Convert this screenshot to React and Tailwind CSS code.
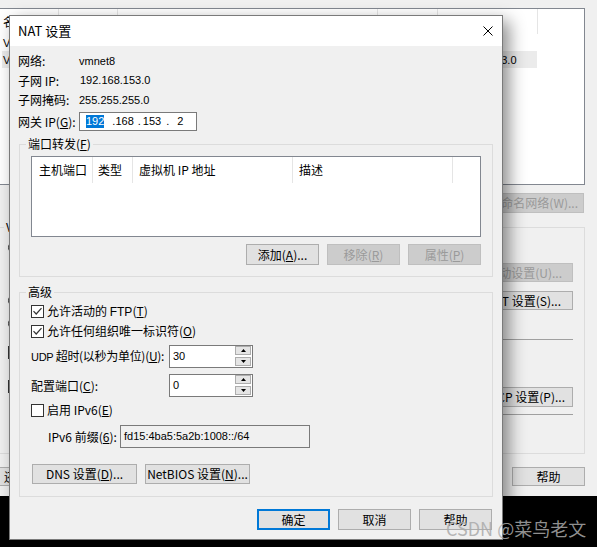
import clsx from "clsx"

function Acc({ k }){
 return(
  <>
   (<span className="underline decoration-1 underline-offset-[1px]">{k}</span>)
  </>
 )
}

// latin values are drawn smaller, like the dialog's Tahoma text
function L({ children, className }){
 return <span className={clsx("font-['Liberation_Sans',sans-serif] text-[11px]", className)}>{children}</span>
}

function Btn({ children, className, disabled, primary, justify }){
 return(
  <div
   className={clsx(
    "flex items-center shrink-0 text-[12px] leading-none",
    justify || "justify-center",
    disabled
     ? "bg-[#cccccc] border border-[#bfbfbf] text-[#9a9a9a]"
     : primary
     ? "bg-[#e1e1e1] border-2 border-[#0078d7]"
     : "bg-[#e1e1e1] border border-[#adadad]",
    className
   )}
  >
   {children}
  </div>
 )
}

function Check({ on }){
 return(
  <div className="w-[13px] h-[13px] shrink-0 border border-[#333333] bg-white flex items-center justify-center">
   {on && (
    <svg width="11" height="11" viewBox="0 0 11 11">
     <path d="M1.5 5.2 L4.2 8 L9.5 2.2" fill="none" stroke="#333333" strokeWidth="1.2" />
    </svg>
   )}
  </div>
 )
}

function Radio(){
 return <div className="w-[13px] h-[13px] shrink-0 rounded-full border border-[#333333] bg-white" />
}

function Group({ title, className, children }){
 return(
  <fieldset className={clsx("border border-[#dcdcdc] min-w-0", className)}>
   <legend className="ml-[6px] px-[2px] h-[14px] leading-[14px] text-[12px]">{title}</legend>
   {children}
  </fieldset>
 )
}

function Spin({ value }){
 return(
  <div className="flex w-[84px] h-[23px] border border-[#7a7a7a] bg-white">
   <div className="flex-1 flex items-center pl-[3px]"><L>{value}</L></div>
   <div className="w-[17px] flex flex-col gap-[2px] pb-[1px] pr-[1px]">
    <div className="flex-1 border border-[#adadad] bg-[#e5e5e5] flex items-center justify-center">
     <svg width="5" height="3" viewBox="0 0 5 3"><path d="M0 3 L2.5 0 L5 3Z" fill="#000" /></svg>
    </div>
    <div className="flex-1 border border-[#adadad] bg-[#e5e5e5] flex items-center justify-center">
     <svg width="5" height="3" viewBox="0 0 5 3"><path d="M0 0 L2.5 3 L5 0Z" fill="#000" /></svg>
    </div>
   </div>
  </div>
 )
}

function BackWindow(){
 return(
  <div className="h-[496px] bg-[#f0f0f0] pt-[8px] flex flex-col overflow-hidden text-[12px] text-black">

   {/* network list */}
   <div className="w-[585px] h-[177px] shrink-0 bg-white border-t border-r border-b border-[#828790] flex flex-col">
    <div className="flex h-[25px] shrink-0">
     <div className="w-[59px] border-r border-[#e5e5e5] pl-[3px] flex items-center">名称</div>
     <div className="w-[59px] border-r border-[#e5e5e5]" />
     <div className="w-[260px] border-r border-[#e5e5e5]" />
     <div className="w-[60px] border-r border-[#e5e5e5]" />
     <div className="w-[100px] border-r border-[#e5e5e5]" />
    </div>
    <div className="flex h-[17px] items-center">
     <div className="w-[59px] pl-[3px]"><L>VMnet1</L></div>
    </div>
    <div className="flex h-[17px] items-center ml-[2px] w-[535px] bg-[#ebebeb]">
     <div className="w-[57px] pl-[1px]"><L>VMnet8</L></div>
     <div className="w-[59px]" />
     <div className="w-[260px]" />
     <div className="w-[60px]" />
     <div className="w-[100px] pl-[9px]"><L>192.168.153.0</L></div>
    </div>
   </div>

   <div className="flex justify-end mt-[8px] mr-[13px] h-[20px]">
    <Btn disabled justify="justify-end" className="w-[105px] h-[20px] pr-[5px]">重命名网络(W)...</Btn>
   </div>

   {/* VMnet info */}
   <Group title="VMnet 信息" className="mt-[7px] -ml-[3px] mr-[12px] pb-[7px]">
    <div className="flex flex-col pl-[10px] pr-[11px]">
     <div className="flex items-center h-[20px] mt-[3px]">
      <Radio />
     </div>
     <div className="flex items-center justify-end h-[19px] mt-[6px]">
      <Btn disabled justify="justify-end" className="w-[100px] h-[19px] pr-[10px]">自动设置(U)...</Btn>
     </div>
     <div className="flex items-center justify-between h-[19px] mt-[9px]">
      <Radio />
      <Btn justify="justify-end" className="w-[100px] h-[19px] pr-[11px]">NAT 设置(S)...</Btn>
     </div>
     <div className="flex items-center h-[20px] mt-[3px]">
      <Radio />
     </div>
     <div className="h-[1px] mt-[6px] ml-[20px] bg-[#a0a0a0]" />
     <div className="flex items-center h-[20px] mt-[2px]">
      <Check on />
     </div>
     <div className="h-[14px]" />
     <div className="flex justify-between h-[31px]">
      <div className="flex items-center h-[20px]">
       <Check on />
      </div>
      <Btn justify="justify-end" className="w-[100px] h-[20px] self-end pr-[7px]">DHCP 设置(P)...</Btn>
     </div>
     <div className="h-[1px] mt-[7px] ml-[20px] bg-[#a0a0a0]" />
     <div className="h-[21px] mt-[10px]" />
    </div>
   </Group>

   <div className="flex justify-between items-center h-[19px] mt-[13px] mr-[12px] -ml-[5px]">
    <Btn justify="justify-start" className="w-[110px] h-[19px] pl-[8px]">还原默认设置(R)</Btn>
    <Btn className="w-[73px] h-[19px]">帮助</Btn>
   </div>

  </div>
 )
}

export default function App(){

 return(

  <div className="relative w-[597px] h-[547px] bg-black overflow-hidden whitespace-nowrap font-['Noto_Sans_CJK_SC',sans-serif] text-black">

   <BackWindow />

   {/* NAT DIALOG */}

   <div className="absolute left-[9px] top-[15px] w-[494px] h-[525px] border border-[#7a7a7a] bg-[#f0f0f0] shadow-[6px_6px_16px_rgba(0,0,0,0.45)] flex flex-col text-[12px]">

    <div className="h-[30px] shrink-0 bg-white flex items-center justify-between pl-[8px]">
     <span className="text-[13px]">NAT 设置</span>
     <svg className="mr-[9px]" width="10" height="10" viewBox="0 0 10 10">
      <path d="M0.5 0.5 L9.5 9.5 M9.5 0.5 L0.5 9.5" stroke="#000" strokeWidth="1" />
     </svg>
    </div>

    <div className="flex flex-col pt-[5px]">

     <div className="flex h-[20px] items-center pl-[8px]">
      <span className="w-[61px]">网络:</span>
      <L>vmnet8</L>
     </div>
     <div className="flex h-[19px] items-center pl-[8px]">
      <span className="w-[62px]">子网 IP:</span>
      <L>192.168.153.0</L>
     </div>
     <div className="flex h-[20px] items-center pl-[8px]">
      <span className="w-[61px]">子网掩码:</span>
      <L>255.255.255.0</L>
     </div>

     <div className="flex h-[19px] items-center pl-[8px] mt-[2px]">
      <span className="w-[61px]">网关 IP<Acc k="G" />:</span>
      <div className="w-[118px] h-[19px] border border-[#7a7a7a] bg-white flex items-center pl-[6px]">
       <L className="bg-[#0078d7] text-white leading-[13px]">192</L>
       <L className="ml-[8px]">.</L>
       <L>168</L>
       <L className="ml-[4px]">.</L>
       <L className="ml-[2px]">153</L>
       <L className="ml-[5px]">.</L>
       <L className="ml-[8px]">2</L>
      </div>
     </div>

     {/* PORT FORWARDING */}

     <Group title={<>端口转发<Acc k="F" /></>} className="mt-[6px] mx-[9px] pb-[11px]">
      <div className="ml-[11px] mt-[5px] w-[450px] h-[81px] border border-[#828790] bg-white">
       <div className="flex h-[26px]">
        <div className="w-[61px] border-r border-[#e5e5e5] pl-[7px] flex items-center">主机端口</div>
        <div className="w-[40px] border-r border-[#e5e5e5] pl-[5px] flex items-center">类型</div>
        <div className="w-[160px] border-r border-[#e5e5e5] pl-[6px] flex items-center">虚拟机 IP 地址</div>
        <div className="w-[160px] border-r border-[#e5e5e5] pl-[6px] flex items-center">描述</div>
       </div>
      </div>
      <div className="flex justify-end gap-[8px] mt-[7px] mr-[11px]">
       <Btn className="w-[73px] h-[21px]">添加<Acc k="A" />...</Btn>
       <Btn disabled className="w-[73px] h-[21px]">移除<Acc k="R" /></Btn>
       <Btn disabled className="w-[73px] h-[21px]">属性<Acc k="P" /></Btn>
      </div>
     </Group>

     {/* ADVANCED */}

     <Group title="高级" className="mt-[8px] mx-[9px] pb-[12px]">
      <div className="flex flex-col pl-[11px]">

       <div className="flex items-center gap-[3px] h-[20px] mt-[2px]">
        <Check on />
        <span>允许活动的 <L className="text-[12px]">FTP</L><Acc k="T" /></span>
       </div>
       <div className="flex items-center gap-[3px] h-[20px]">
        <Check on />
        <span>允许任何组织唯一标识符<Acc k="O" /></span>
       </div>

       <div className="flex items-center h-[23px] mt-[4px]">
        <span className="w-[138px] tracking-[-0.3px]"><L>UDP</L> 超时(以秒为单位)<Acc k="U" />:</span>
        <Spin value="30" />
       </div>
       <div className="flex items-center h-[23px] mt-[6px]">
        <span className="w-[138px]">配置端口<Acc k="C" />:</span>
        <Spin value="0" />
       </div>

       <div className="flex items-center gap-[3px] h-[20px] mt-[3px]">
        <Check />
        <span>启用 IPv6<Acc k="E" /></span>
       </div>

       <div className="flex items-center h-[23px] mt-[5px] pl-[17px]">
        <span className="w-[72px]">IPv6 前缀<Acc k="6" />:</span>
        <div className="w-[190px] h-[23px] border border-[#7a7a7a] bg-[#f0f0f0] flex items-center pl-[3px]">
         <L>fd15:4ba5:5a2b:1008::/64</L>
        </div>
       </div>

       <div className="flex gap-[8px] mt-[16px] pl-[1px]">
        <Btn className="w-[105px] h-[20px]">DNS 设置<Acc k="D" />...</Btn>
        <Btn className="w-[105px] h-[20px]">NetBIOS 设置<Acc k="N" />...</Btn>
       </div>

      </div>
     </Group>

     <div className="flex justify-end gap-[8px] mt-[12px] mr-[10px]">
      <Btn primary className="w-[73px] h-[21px]">确定</Btn>
      <Btn className="w-[73px] h-[21px]">取消</Btn>
      <Btn className="w-[73px] h-[21px]">帮助</Btn>
     </div>

    </div>

   </div>

   {/* WATERMARK */}

   <div className="absolute left-[446px] top-[515px] text-[18px] text-[rgba(170,170,170,0.85)] pointer-events-none">
    CSDN @菜鸟老文
   </div>

  </div>

 )

}
